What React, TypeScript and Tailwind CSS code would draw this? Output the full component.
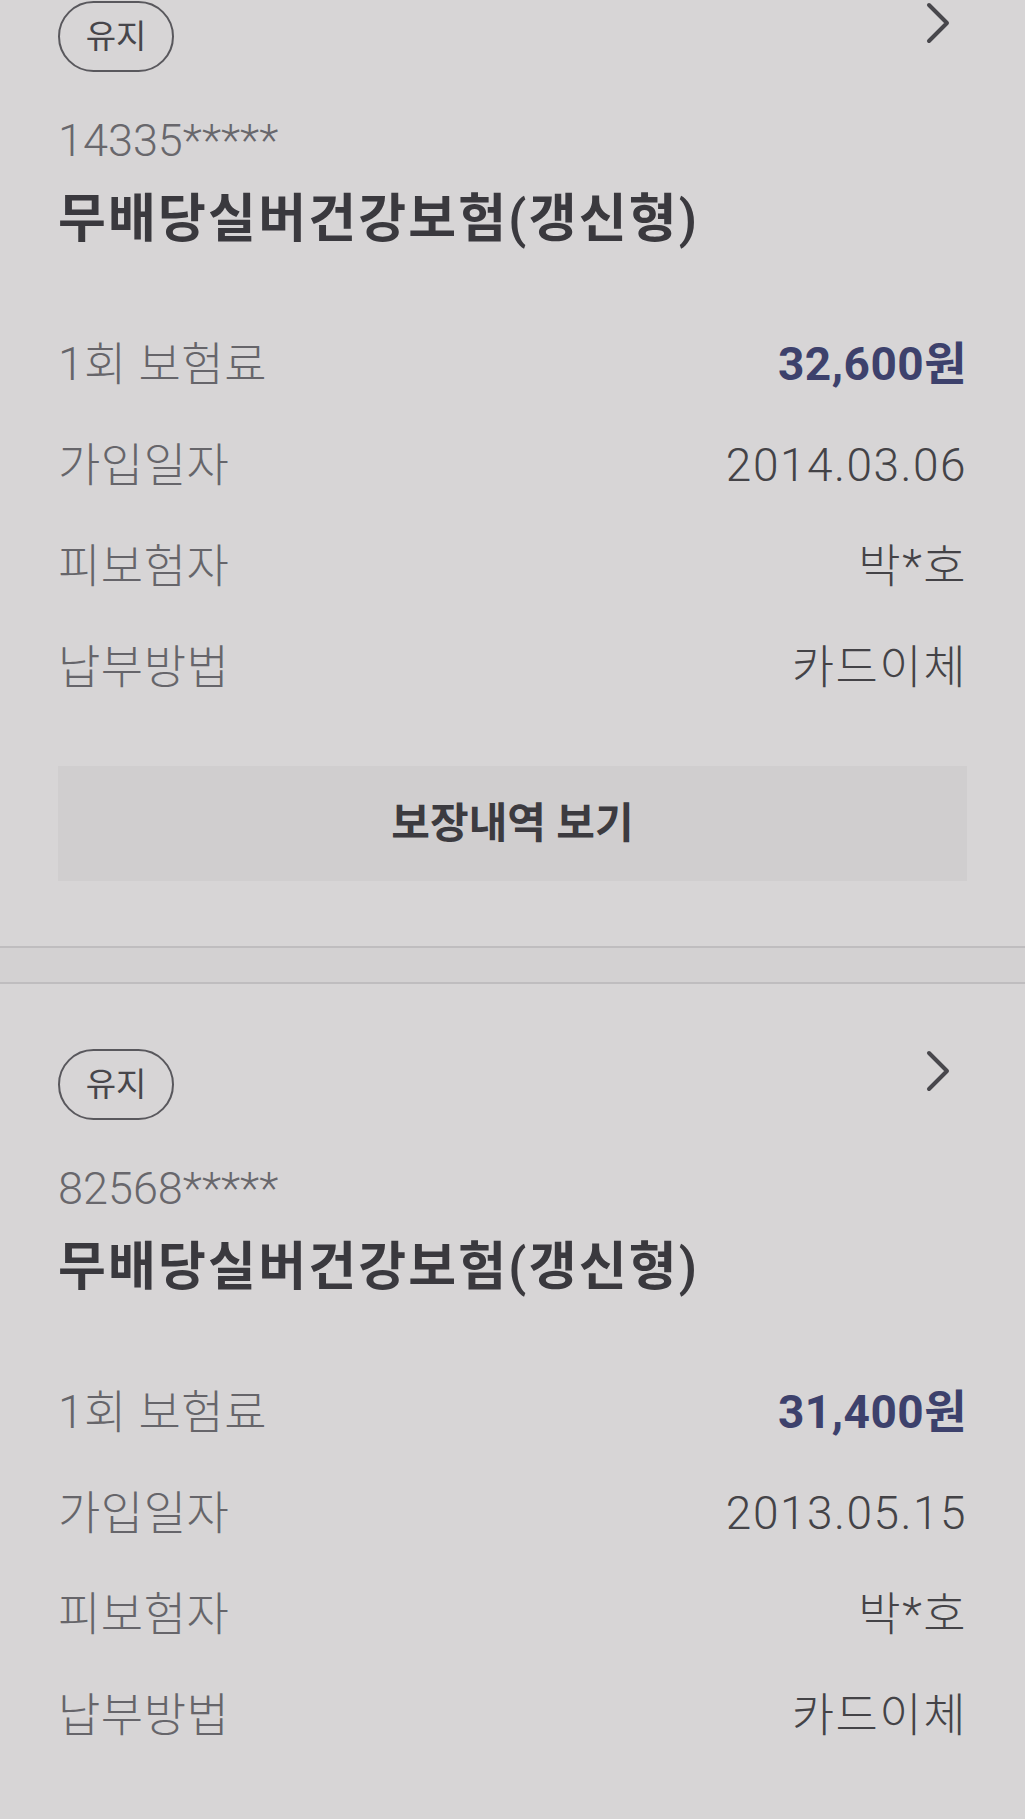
import React from "react";

type Policy = {
  status: string;
  number: string;
  name: string;
  premium: string;
  joinedAt: string;
  insured: string;
  payMethod: string;
};

const POLICIES: Policy[] = [
  {
    status: "유지",
    number: "14335*****",
    name: "무배당실버건강보험(갱신형)",
    premium: "32,600원",
    joinedAt: "2014.03.06",
    insured: "박*호",
    payMethod: "카드이체",
  },
  {
    status: "유지",
    number: "82568*****",
    name: "무배당실버건강보험(갱신형)",
    premium: "31,400원",
    joinedAt: "2013.05.15",
    insured: "박*호",
    payMethod: "카드이체",
  },
];

function Chevron() {
  return (
    <svg width="26" height="42" viewBox="0 0 26 42" fill="none" className="text-[#48474c]">
      <path d="M4 3 L22 21 L4 39" stroke="currentColor" strokeWidth="4" strokeLinecap="round" strokeLinejoin="round" />
    </svg>
  );
}

function Row({ label, value, strong }: { label: string; value: string; strong?: boolean }) {
  return (
    <div className="flex h-[101px] items-center justify-between">
      <span className="text-[46px] font-light tracking-[0.5px] text-[#66656a]">{label}</span>
      <span
        className={
          strong
            ? "text-[46px] font-bold tracking-[0.5px] text-[#3d416c]"
            : "text-[46px] font-light tracking-[1.5px] text-[#444347]"
        }
      >
        {value}
      </span>
    </div>
  );
}

function PolicyCard({ p, showButton }: { p: Policy; showButton: boolean }) {
  return (
    <section className="px-[58px]">
      {/* HEADER */}
      <div className="flex items-start justify-between">
        <span className="flex h-[71px] w-[116px] items-center justify-center rounded-full border-2 border-[#59585d] text-[33px] text-[#47464b]">
          {p.status}
        </span>
        <span className="mr-[16px] mt-[1px]">
          <Chevron />
        </span>
      </div>

      <div className="mt-[41px] h-[56px] text-[45px] font-light leading-[56px] text-[#68676c]">
        {p.number}
      </div>
      <h2 className="mt-[19px] h-[64px] text-[52px] font-semibold leading-[64px] tracking-[2.2px] text-[#3a393e]">
        {p.name}
      </h2>

      {/* DETAILS */}
      <div className="mt-[62px]">
        <Row label="1회 보험료" value={p.premium} strong />
        <Row label="가입일자" value={p.joinedAt} />
        <Row label="피보험자" value={p.insured} />
        <Row label="납부방법" value={p.payMethod} />
      </div>

      {showButton && (
        <button className="mt-[48px] flex h-[115px] w-full items-center justify-center bg-[#d0cecf] text-[42px] font-semibold text-[#3c3b40]">
          보장내역 보기
        </button>
      )}
    </section>
  );
}

export default function App() {
  return (
    <div
      className="h-[1819px] w-full overflow-hidden bg-[#d7d5d6] pt-[1px]"
      style={{ fontFamily: 'Roboto, "Noto Sans CJK KR", sans-serif' }}
    >
      <PolicyCard p={POLICIES[0]} showButton />
      <div className="my-[65px] h-[38px] border-y-2 border-[#bfbdbf] bg-[#d3d1d2]" />
      <PolicyCard p={POLICIES[1]} showButton={false} />
    </div>
  );
}
